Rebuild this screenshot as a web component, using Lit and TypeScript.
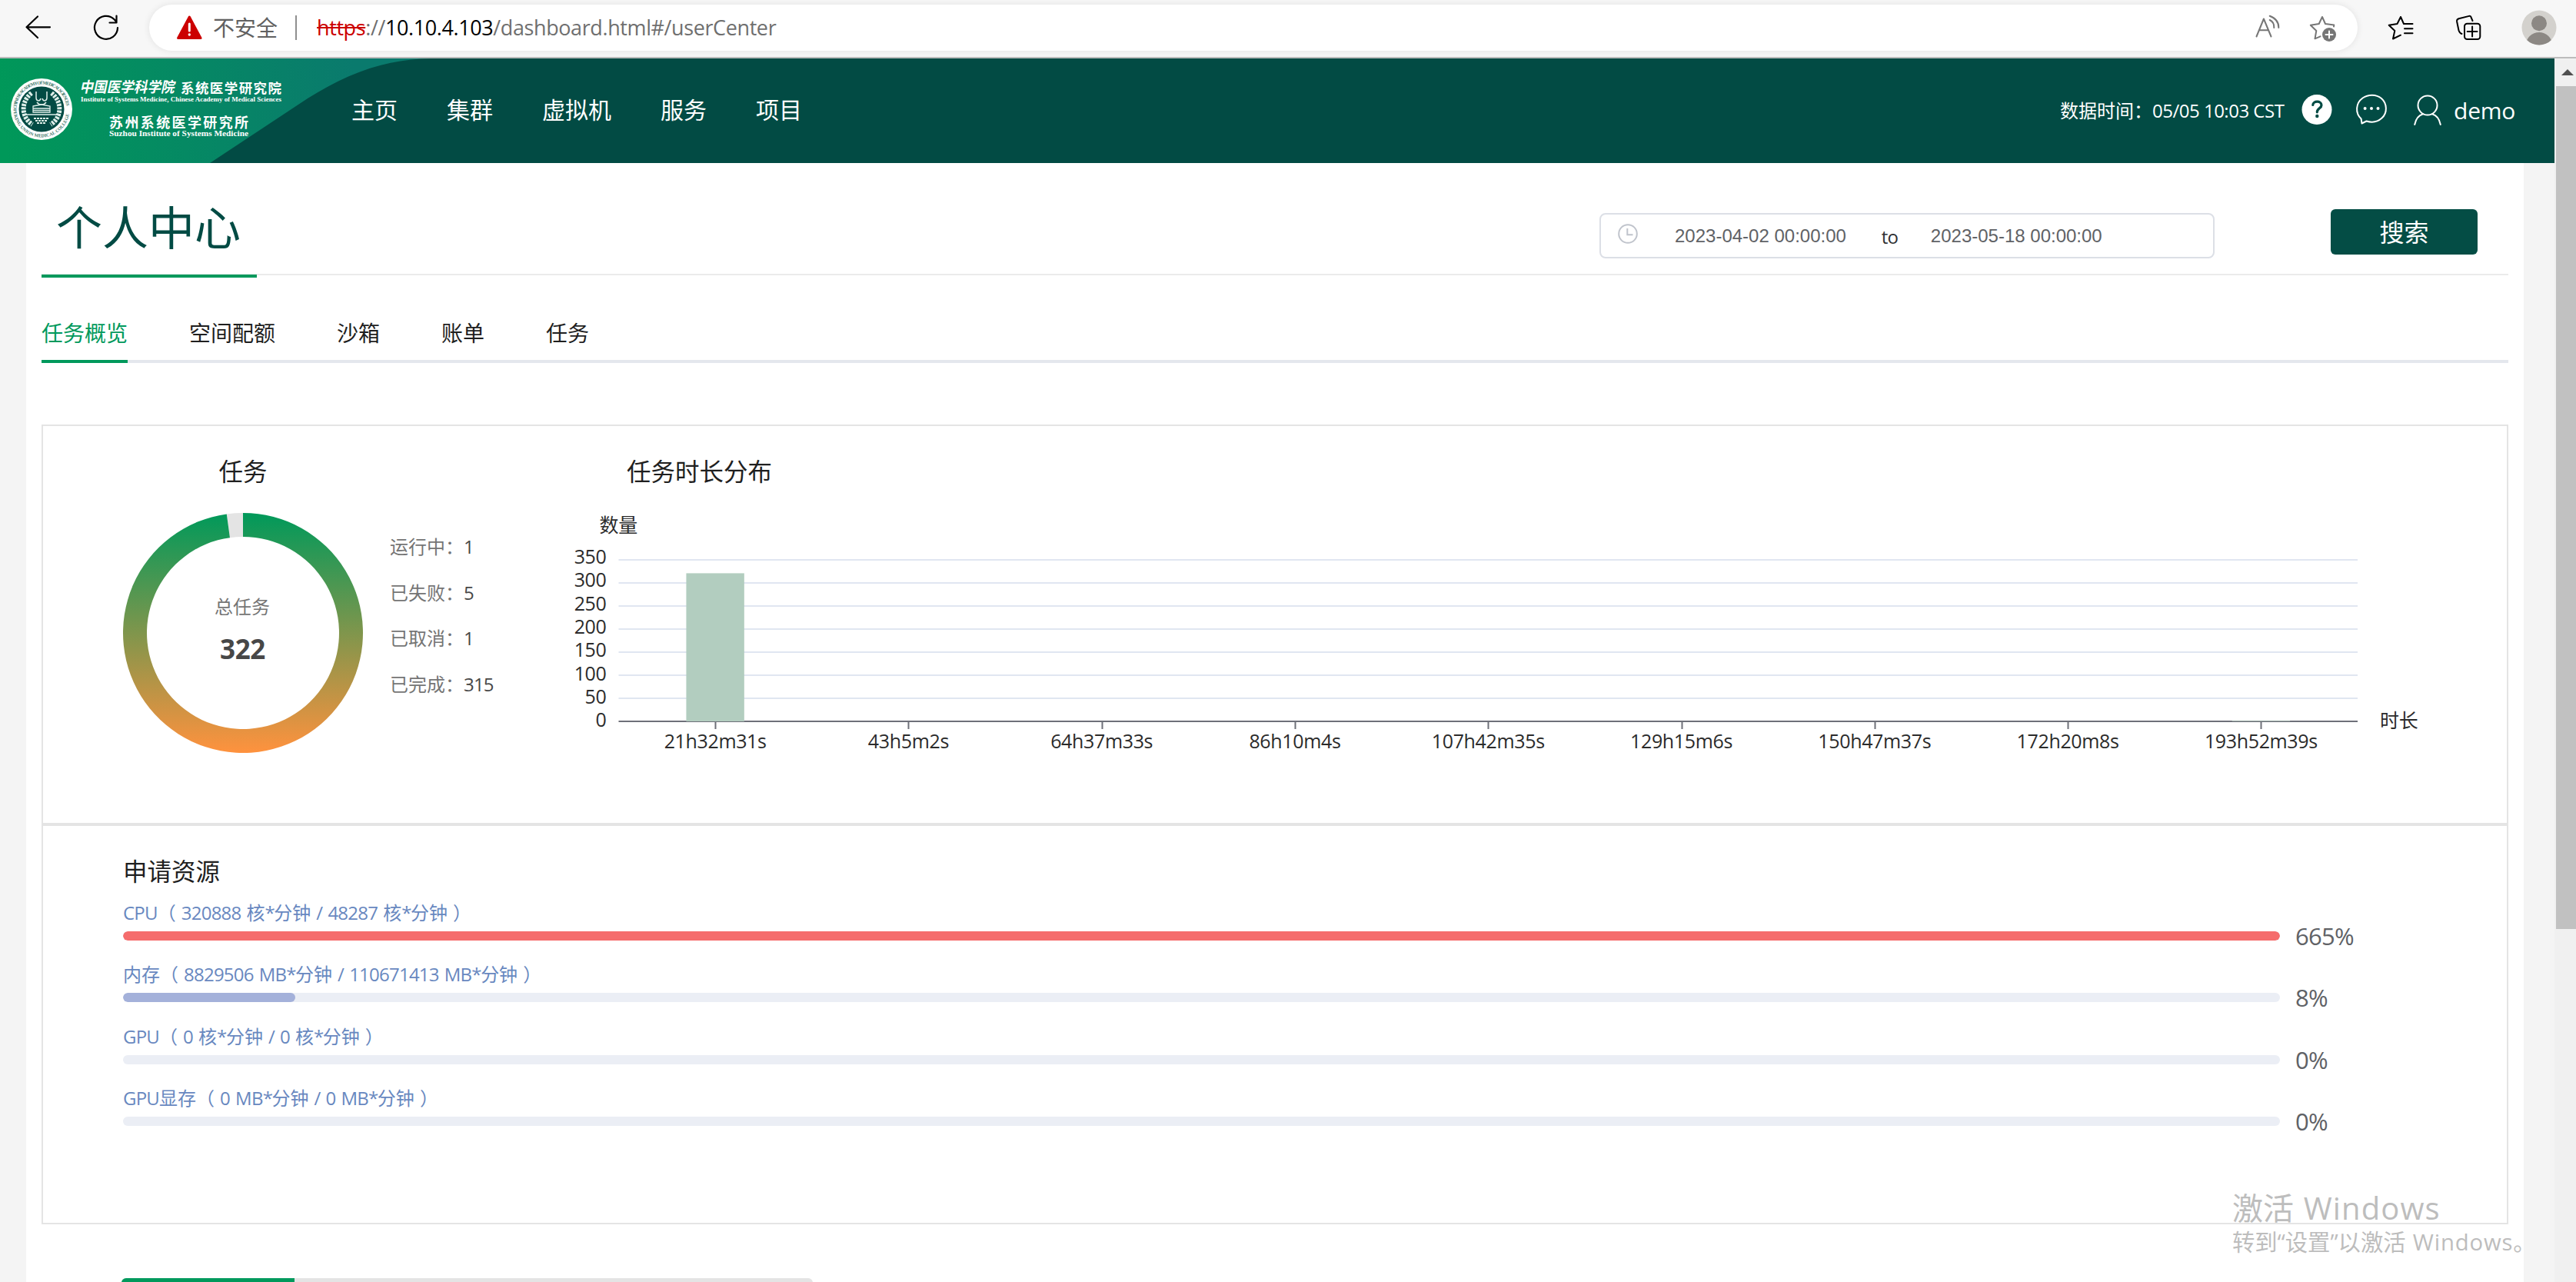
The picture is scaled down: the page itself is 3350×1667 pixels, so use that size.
import { LitElement, html, svg, css } from "lit";
import { customElement, property } from "lit/decorators.js";

const SANS = css`"Open Sans", "Noto Sans CJK SC", sans-serif`;

/** Splits a label so that Latin runs can be tracked separately from Chinese ones. */
const mixed = (text: string) =>
  (text.match(/\*|[\x20-\x29\x2b-\x7e]+|[^\x20-\x7e]+/g) ?? []).map((run) =>
    run === "*"
      ? html`<span class="star">*</span>`
      : /^[\x20-\x7e]/.test(run)
        ? html`<span class="latin">${run}</span>`
        : html`<span>${run}</span>`
  );

@customElement("browser-bar")
export class BrowserBar extends LitElement {
  static styles = css`
    :host {
      display: flex;
      box-sizing: border-box;
      height: 76px;
      padding-left: 30px;
      background: #f7f7f7;
      border-bottom: 2px solid #bcbcbc;
      font-family: ${SANS};
    }
    svg {
      display: block;
      flex: none;
      fill: none;
      stroke-width: 2;
      stroke-linejoin: round;
      stroke-linecap: round;
      stroke: #000;
    }
    .tool {
      margin-top: 16px;
    }
    .reload {
      margin-left: 48px;
    }
    .address {
      display: flex;
      align-items: center;
      box-sizing: border-box;
      width: 2872px;
      height: 60px;
      margin: 6px 0 0 36px;
      padding: 0 23px 0 36px;
      border-radius: 30px;
      background: #fff;
      box-shadow: 0 0 10px rgba(0, 0, 0, 0.09);
      color: #6f6f6f;
      line-height: 40px;
      white-space: pre;
    }
    .warn {
      fill: #c00;
      stroke: #c00;
    }
    .unsafe {
      margin-left: 14px;
      width: 107px;
      font-size: 28px;
      color: #616161;
    }
    .rule {
      width: 2px;
      height: 32px;
      margin-right: 26px;
      background: #8f8f8f;
    }
    .url {
      flex: 1;
      font-size: 27px;
      letter-spacing: -0.4px;
    }
    .scheme {
      color: #c00;
      text-decoration: line-through;
      text-decoration-thickness: 2px;
    }
    .host {
      color: #000;
    }
    .grey {
      stroke: #767676;
    }
    .gap1 {
      margin-left: 30px;
    }
    .gap2 {
      margin-left: 35px;
    }
    .gap3 {
      margin-left: 46px;
    }
    .avatar {
      margin: 13px 0 0 46px;
    }
  `;

  render() {
    return html`
      <svg class="tool" width="40" height="40" viewBox="30 16 40 40">
        <path d="M49 21.500L34.500 35.300L49 49M34.500 35.300H65" stroke-width="2.200" />
      </svg>
      <svg class="tool reload" width="40" height="40" viewBox="118 16 40 40">
        <path d="M153 36A15 15 0 1 1 148.600 25.200L151.500 28.500M151.500 20.500V29.500H142.500" stroke-width="2.200" />
      </svg>
      <div class="address">
        <svg width="33" height="32" viewBox="230 19 33 32">
          <path class="warn" d="M246.300 21L261 48.500H231.600Z" stroke-width="3" />
          <path d="M246.300 30V39" stroke="#fff" stroke-width="3" />
          <circle cx="246.300" cy="44" r="1.700" fill="#fff" stroke="none" />
        </svg>
        <span class="unsafe">不安全</span>
        <span class="rule"></span>
        <span class="url"><span class="scheme">https</span>://<span class="host">10.10.4.103</span>/dashboard.html#/userCenter</span>
        <svg class="grey" width="38" height="40" viewBox="2931 16 38 40">
          <path d="M2934.500 47.500L2943.900 24.500L2953.500 47.500M2938 39.300H2950M2951.700 26C2956 28 2957.500 32 2957.300 36M2951.700 20.800C2960 24 2963.500 30 2963.300 36" />
        </svg>
        <svg class="grey gap1" width="44" height="40" viewBox="2999 16 44 40">
          <path d="M3035 34.500L3035.300 32.500L3024 31L3020 22L3015.700 31L3004.800 32.700L3012.300 40L3010.500 50.300L3017.500 47.300" />
          <circle cx="3029" cy="45" r="9" fill="#767676" stroke="none" />
          <path d="M3024.500 45H3033.500M3029 40.500V49.500" stroke="#fff" />
        </svg>
      </div>
      <svg class="tool gap2" width="42" height="40" viewBox="3101 16 42 40">
        <path
          d="M3122 22L3117.500 31L3106.700 32.700L3114.300 40L3112 50.500L3122 45.700M3122 22L3126 31H3137.500M3127 37.200H3137.500M3127 43.300H3137.500"
        />
      </svg>
      <svg class="tool gap3" width="44" height="40" viewBox="3189 16 44 40">
        <path d="M3215.500 27L3213.300 21.800Q3212.600 20.500 3211 20.900L3197.500 24.300Q3194.700 25.200 3195.100 28L3197.500 39.500Q3198.500 43 3201.500 44" />
        <rect x="3205" y="30.700" width="20.300" height="20.300" rx="3.500" />
        <path d="M3208.700 41H3221.500M3215.100 34.500V47.500" />
      </svg>
      <svg class="avatar" width="46" height="46" viewBox="3279 13 46 46">
        <clipPath id="face"><circle cx="3302" cy="36" r="22.500" /></clipPath>
        <circle cx="3302" cy="36" r="22.500" fill="#d3d1cd" stroke="none" />
        <circle cx="3302" cy="30.300" r="10" fill="#8c8884" stroke="none" />
        <ellipse cx="3302" cy="58" rx="17" ry="16" fill="#8c8884" stroke="none" clip-path="url(#face)" />
      </svg>
    `;
  }
}

@customElement("site-header")
export class SiteHeader extends LitElement {
  static styles = css`
    :host {
      display: flex;
      align-items: center;
      height: 136px;
      background: #024b44;
      color: #fff;
      font-family: ${SANS};
      line-height: 40px;
      white-space: pre;
    }
    svg {
      display: block;
      flex: none;
    }
    .brand {
      overflow: visible;
      fill: #fff;
    }
    .ink {
      fill: none;
      stroke: #dfeee9;
    }
    .serif {
      font-family: "Liberation Serif", serif;
      font-weight: 700;
    }
    .hei {
      font-family: "Noto Sans CJK SC", sans-serif;
      font-weight: 700;
    }
    nav {
      display: flex;
      gap: 64px;
      flex: 1;
      padding-bottom: 2px;
      font-size: 30px;
      position: relative;
    }
    .time {
      width: 314px;
      padding-bottom: 1px;
      font-size: 24px;
    }
    .latin {
      letter-spacing: -0.5px;
    }
    .line {
      fill: none;
      stroke: #fff;
      stroke-width: 2;
      stroke-linecap: round;
      stroke-linejoin: round;
    }
    .icon {
      margin-bottom: 2px;
    }
    .chat {
      margin-left: 30px;
    }
    .user {
      margin-left: 32px;
    }
    .name {
      width: 131px;
      margin-left: 12px;
      font-size: 30px;
      letter-spacing: -0.2px;
    }
  `;

  render() {
    return html`
      <svg class="brand" width="457" height="136" viewBox="0 0 457 136">
        <defs>
          <linearGradient id="brand" gradientUnits="userSpaceOnUse" x1="0" y1="60" x2="460" y2="0">
            <stop offset="0" stop-color="#009859" />
            <stop offset="1" stop-color="#0a7a6d" />
          </linearGradient>
          <path id="top" d="M21.500 66A32.500 32.500 0 0 1 86.500 66" />
          <path id="base" d="M17.500 66A36.500 36.500 0 0 0 90.500 66" />
        </defs>
        <path d="M0 0H560C498 1 450 21 400 52L273 136H0Z" fill="url(#brand)" />
        <circle cx="54" cy="66" r="40" />
        <circle cx="54" cy="66" r="29.500" fill="#024b44" />
        <g class="serif" font-size="6" fill="#3c776a">
          <text><textPath href="#top" textLength="98">CHINESE ACADEMY OF MEDICAL SCIENCES</textPath></text>
          <text><textPath href="#base" textLength="108">PEKING UNION MEDICAL COLLEGE</textPath></text>
        </g>
        <g class="ink">
          <path d="M41 45C27 56 27 76 42 86M67 45C81 56 81 76 66 86" stroke-width="6" stroke-dasharray="3 1.300" />
          <path d="M47 43V51C47 56 52 56 53 52M61 43V51C61 56 56 56 55 52M48 57C51 61 57 61 60 57" stroke-width="1.500" />
          <path d="M43 62L54 60L65 62V70H43ZM43 65H65M43 67.500H65M29 73H79" stroke-width="1.300" />
          <path d="M44 78H64M46 81H62M48 84H60" stroke-width="2" stroke-dasharray="3 1" />
        </g>
        <text class="hei" x="113" y="44.500" font-size="19" textLength="123" lengthAdjust="spacingAndGlyphs" transform="skewX(-12)">中国医学科学院</text>
        <text class="hei" x="235" y="44.500" font-size="17.500" textLength="131">系统医学研究院</text>
        <text class="serif" x="105" y="56" font-size="9" textLength="261" lengthAdjust="spacingAndGlyphs">Institute of Systems Medicine, Chinese Academy of Medical Sciences</text>
        <text class="hei" x="142" y="89.500" font-size="18" textLength="181">苏州系统医学研究所</text>
        <text class="serif" x="142" y="101" font-size="10.500" textLength="181" lengthAdjust="spacingAndGlyphs">Suzhou Institute of Systems Medicine</text>
      </svg>
      <nav>
        ${["主页", "集群", "虚拟机", "服务", "项目"].map((item) => html`<span>${item}</span>`)}
      </nav>
      <span class="time">数据时间：<span class="latin">05/05 10:03 CST</span></span>
      <svg class="icon" width="40" height="44" viewBox="2992 120 40 44">
        <circle cx="3012" cy="141.500" r="19.500" fill="#fff" />
        <path
          d="M3006.800 135.500C3007 130 3017.800 129.500 3018 135.700C3018.100 139.800 3012.300 140 3012.300 144.800"
          fill="none" stroke="#024b44" stroke-width="3.200" stroke-linecap="round"
        />
        <circle cx="3012.300" cy="150" r="2.200" fill="#024b44" />
      </svg>
      <svg class="line icon chat" width="42" height="44" viewBox="3062 120 42 44">
        <path d="M3070.500 159.500L3069.600 153.500C3061.500 146 3062.500 133 3071.500 126.500C3079 121.500 3089 121.500 3096 127C3103.500 133.500 3104 146 3096.500 152.500C3090.500 158 3083 158.500 3076.500 156.500Z" />
        <g fill="#fff" stroke="none">
          <circle cx="3074.600" cy="140" r="2" />
          <circle cx="3083" cy="140" r="2" />
          <circle cx="3091.500" cy="140" r="2" />
        </g>
      </svg>
      <svg class="line icon user" width="42" height="44" viewBox="3136 120 42 44">
        <circle cx="3156" cy="136" r="12.500" />
        <path d="M3139.200 161C3140.500 154.500 3144.500 149 3150 147.300M3162 147.300C3167.500 149 3171.500 154.500 3172.800 161" />
      </svg>
      <span class="name">demo</span>
    `;
  }
}

@customElement("task-donut")
export class TaskDonut extends LitElement {
  @property({ type: Number }) total = 0;
  @property({ type: Number }) done = 0;

  static styles = css`
    :host,
    svg {
      display: block;
      width: 312px;
      height: 312px;
    }
    text {
      font-family: ${SANS};
      text-anchor: middle;
    }
    .caption {
      font-size: 24px;
      fill: #757575;
    }
    .value {
      font-size: 35px;
      font-weight: 700;
      letter-spacing: -0.3px;
      fill: #474747;
    }
  `;

  private slice(from: number, to: number) {
    const at = (turn: number, r: number) => {
      const a = turn * 2 * Math.PI;
      return `${156 + r * Math.sin(a)} ${156 - r * Math.cos(a)}`;
    };
    const big = to - from > 0.5 ? 1 : 0;
    return `M${at(from, 156)}A156 156 0 ${big} 1 ${at(to, 156)}L${at(to, 125)}A125 125 0 ${big} 0 ${at(from, 125)}Z`;
  }

  render() {
    const share = this.done / this.total;
    return html`
      <svg viewBox="0 0 312 312">
        <linearGradient id="ring" x1="0" y1="0" x2="0" y2="1">
          <stop offset="0" stop-color="#00995a" />
          <stop offset="1" stop-color="#ff923e" />
        </linearGradient>
        <path d=${this.slice(share, 1)} fill="#e4e4e4" />
        <path d=${this.slice(0, share)} fill="url(#ring)" />
        <text class="caption" x="155" y="130.500">总任务</text>
        <text class="value" x="155.500" y="190">${this.total}</text>
      </svg>
    `;
  }
}

@customElement("duration-chart")
export class DurationChart extends LitElement {
  static styles = css`
    :host,
    svg {
      display: block;
      width: 2460px;
      height: 340px;
    }
    text {
      font-family: ${SANS};
      font-size: 25px;
      letter-spacing: -0.35px;
      fill: #2b2b2b;
    }
    .tick {
      text-anchor: end;
    }
    .label {
      text-anchor: middle;
    }
  `;

  private bins: [string, number][] = [
    ["21h32m31s", 321],
    ["43h5m2s", 0],
    ["64h37m33s", 0],
    ["86h10m4s", 0],
    ["107h42m35s", 0],
    ["129h15m6s", 0],
    ["150h47m37s", 0],
    ["172h20m8s", 0],
    ["193h52m39s", 1],
  ];

  render() {
    const left = 804.5;
    const right = 3066;
    const band = (right - left) / this.bins.length;
    const ticks = [350, 300, 250, 200, 150, 100, 50, 0];
    return html`
      <svg viewBox="740 660 2460 340">
        <text x="779.500" y="692">数量</text>
        ${ticks.map(
          (v, i) => svg`
            <rect x=${left} y=${937 - v * 0.6} width=${right - left} height="2" fill=${v ? "#e0e6f1" : "#6e7079"} />
            <text class="tick" x="788.500" y=${733 + i * 30.3}>${v}</text>`
        )}
        ${this.bins.map(([name, count], i) => {
          const mid = left + band * (i + 0.5);
          return svg`
            <rect x=${Math.round(mid) - 0.5} y="939" width="2" height="9" fill="#6e7079" />
            <rect x=${mid - 37.7} y=${938 - count * 0.6} width="75.400" height=${count * 0.6} fill="#b2cdbf" />
            <text class="label" x=${mid} y="973">${name}</text>`;
        })}
        <text x="3095" y="946">时长</text>
      </svg>
    `;
  }
}

@customElement("app-root")
export class AppRoot extends LitElement {
  static styles = css`
    :host {
      display: block;
      position: relative;
      width: 3350px;
      height: 1667px;
      overflow: hidden;
      background: #f4f4f4;
      font-family: ${SANS};
      color: #1f1f1f;
    }
    .latin {
      letter-spacing: -0.032em;
      word-spacing: 0.065em;
    }
    .star {
      letter-spacing: -0.06em;
    }
    .window {
      display: flex;
      height: 1591px;
    }
    .page {
      display: flex;
      flex-direction: column;
      width: 3322px;
    }
    .rail {
      width: 28px;
      background: #f0f0f0;
    }
    .rail svg {
      display: block;
    }
    .thumb {
      height: 1096px;
      margin-left: 2px;
      background: #c1c1c1;
    }
    .sheet {
      flex: 1;
      margin: 0 40px 0 34px;
      padding: 0 20px;
      background: #fff;
    }
    .head {
      display: flex;
      align-items: flex-start;
      height: 144px;
      border-bottom: 2px solid #ebebeb;
    }
    .title {
      box-sizing: border-box;
      width: 280px;
      height: 149px;
      padding: 54px 0 0 19px;
      border-bottom: 4px solid #00995c;
      font-size: 60px;
      line-height: 60px;
      color: #024b44;
      white-space: nowrap;
    }
    .range {
      display: flex;
      align-items: center;
      box-sizing: border-box;
      width: 800px;
      height: 59px;
      margin: 65px 151px 0 auto;
      padding-left: 21px;
      border: 2px solid #dcdfe6;
      border-radius: 8px;
      font: 24px/28px "Liberation Sans", Arial, sans-serif;
      color: #606266;
    }
    .clock {
      margin: 0 47px 6px 0;
      fill: none;
      stroke: #c0c4cc;
      stroke-width: 2;
    }
    .to {
      width: 64px;
      margin-left: 46px;
      padding-top: 3px;
      font-family: ${SANS};
      letter-spacing: -0.8px;
      color: #303133;
    }
    .search {
      width: 191px;
      height: 59px;
      margin: 60px 40px 0 0;
      border-radius: 6px;
      background: #044d45;
      color: #fff;
      font-size: 32px;
      line-height: 60px;
      text-align: center;
    }
    .tabs {
      display: flex;
      gap: 80px;
      height: 110px;
      border-bottom: 4px solid #e4e7ed;
      font-size: 28px;
      line-height: 28px;
    }
    .tab {
      box-sizing: border-box;
      height: 114px;
      padding-top: 61px;
    }
    .tab.on {
      border-bottom: 4px solid #00995c;
      color: #00995c;
    }
    .panel {
      box-sizing: border-box;
      height: 520px;
      padding: 43px 0 0 104px;
      border: 2px solid #e4e4e4;
    }
    .panel.first {
      display: flex;
      margin-top: 80px;
    }
    .caption {
      font-size: 31.500px;
      line-height: 32px;
      white-space: nowrap;
    }
    .total {
      width: 312px;
    }
    .total .caption {
      margin-bottom: 38px;
      text-align: center;
    }
    .states {
      width: 233px;
      margin: 84px 0 0 35px;
      font-size: 24px;
      line-height: 59.700px;
      color: #757575;
    }
    .count {
      color: #474747;
      letter-spacing: -0.8px;
    }
    .chart .caption {
      margin: 0 0 31px 75px;
    }
    .resources {
      margin-top: 22px;
    }
    .resource {
      height: 80.400px;
    }
    .label {
      font-size: 24px;
      line-height: 31px;
      color: #6888c0;
      white-space: pre;
    }
    .meter {
      display: flex;
      align-items: center;
      gap: 20px;
      height: 30px;
    }
    .track {
      width: 2805px;
      height: 12px;
      border-radius: 6px;
      background: #ebeef5;
      overflow: hidden;
    }
    .fill {
      height: 12px;
      border-radius: 6px;
      background: #a4b1da;
    }
    .fill.over {
      background: #f56c6c;
    }
    .percent {
      font-size: 31px;
      line-height: 30px;
      letter-spacing: -0.7px;
      color: #606266;
    }
    .strip {
      width: 899px;
      height: 40px;
      margin: 70px 0 0 104px;
      border-radius: 6px 6px 0 0;
      background: #e4e4e4;
      overflow: hidden;
    }
    .stripOn {
      width: 225px;
      height: 40px;
      background: #00995c;
    }
    .activate {
      position: absolute;
      left: 2903px;
      top: 1546px;
      color: #bdbdbd;
      white-space: nowrap;
    }
    .activate .big {
      font-size: 40px;
      line-height: 50px;
    }
    .activate .small {
      font-size: 29.300px;
      line-height: 38px;
    }
    .wide {
      letter-spacing: 0.028em;
      word-spacing: 0.03em;
    }
  `;

  private states: [string, number][] = [
    ["运行中", 1],
    ["已失败", 5],
    ["已取消", 1],
    ["已完成", 315],
  ];

  private resources: [string, number][] = [
    ["CPU（ 320888 核*分钟 / 48287 核*分钟 ）", 665],
    ["内存（ 8829506 MB*分钟 / 110671413 MB*分钟 ）", 8],
    ["GPU（ 0 核*分钟 / 0 核*分钟 ）", 0],
    ["GPU显存（ 0 MB*分钟 / 0 MB*分钟 ）", 0],
  ];

  render() {
    return html`
      <browser-bar></browser-bar>
      <div class="window">
        <div class="page">
          <site-header></site-header>
          <main class="sheet">
            <div class="head">
              <div class="title">个人中心</div>
              <div class="range">
                <svg class="clock" width="28" height="28" viewBox="0 0 28 28">
                  <circle cx="14" cy="14" r="11.800" />
                  <path d="M13.300 7V15.300H20.500" />
                </svg>
                <span>2023-04-02 00:00:00</span>
                <span class="to">to</span>
                <span>2023-05-18 00:00:00</span>
              </div>
              <div class="search">搜索</div>
            </div>
            <div class="tabs">
              ${["任务概览", "空间配额", "沙箱", "账单", "任务"].map(
                (tab, i) => html`<div class="tab ${i ? "" : "on"}">${tab}</div>`
              )}
            </div>
            <section class="panel first">
              <div class="total">
                <div class="caption">任务</div>
                <task-donut .total=${322} .done=${315}></task-donut>
              </div>
              <div class="states">
                ${this.states.map(([name, n]) => html`<div>${name}：<span class="count">${n}</span></div>`)}
              </div>
              <div class="chart">
                <div class="caption">任务时长分布</div>
                <duration-chart></duration-chart>
              </div>
            </section>
            <section class="panel">
              <div class="caption">申请资源</div>
              <div class="resources">
                ${this.resources.map(
                  ([label, pct]) => html`
                    <div class="resource">
                      <div class="label">${mixed(label)}</div>
                      <div class="meter">
                        <div class="track">
                          <div class="fill ${pct > 100 ? "over" : ""}" style="width:${Math.min(pct, 100)}%"></div>
                        </div>
                        <span class="percent">${pct}%</span>
                      </div>
                    </div>
                  `
                )}
              </div>
            </section>
            <div class="strip"><div class="stripOn"></div></div>
          </main>
        </div>
        <div class="rail">
          <svg width="28" height="36" viewBox="0 0 28 36"><path d="M9 22L17 14L25 22Z" fill="#505050" /></svg>
          <div class="thumb"></div>
        </div>
      </div>
      <div class="activate">
        <div class="big">激活<span class="wide"> Windows</span></div>
        <div class="small">转到“设置”以激活<span class="wide"> Windows</span>。</div>
      </div>
    `;
  }
}
